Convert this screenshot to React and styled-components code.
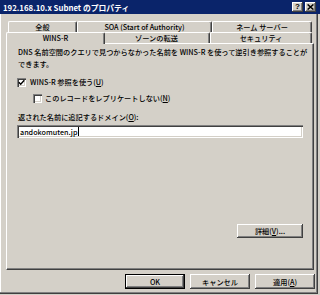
import React from "react";
import styled, { createGlobalStyle, css } from "styled-components";

const face = `"Noto Sans CJK JP", "Liberation Sans", sans-serif`;

const GlobalStyle = createGlobalStyle`
  html, body {
    margin: 0;
    padding: 0;
    background: #d4d0c8;
  }
`;

const raised = css`
  background: #d4d0c8;
  box-shadow: inset -1px -1px #404040, inset 1px 1px #fff, inset -2px -2px #808080;
`;

const sunken = css`
  box-shadow: inset 1px 1px #808080, inset 2px 2px #404040, inset -1px -1px #fff,
    inset -2px -2px #d4d0c8;
`;

const Window = styled.div`
  width: 320px;
  height: 295px;
  display: flex;
  flex-direction: column;
  background: #d4d0c8;
  overflow: hidden;
  font-family: ${face};
  font-size: 7.2px;
  font-weight: 500;
  color: #000;
`;

const TitleBar = styled.div`
  height: 14px;
  flex: none;
  box-sizing: border-box;
  padding: 0 4px 0 3px;
  background: #0a246a;
  color: #fff;
  display: flex;
  align-items: center;
  justify-content: space-between;
`;

const Title = styled.span`
  font-weight: bold;
  font-size: 7.8px;
  white-space: nowrap;
`;

const CaptionButtons = styled.div`
  display: flex;
  gap: 2px;
`;

const CaptionButton = styled.div`
  ${raised};
  width: 11px;
  height: 10px;
  box-sizing: border-box;
  display: flex;
  align-items: center;
  justify-content: center;
  color: #000;
  font-family: "Liberation Sans", sans-serif;
  font-weight: bold;
  font-size: 8px;
  line-height: 1;
`;

const Body = styled.div`
  width: 318px;
  height: 280px;
  flex: none;
  box-sizing: border-box;
  padding-top: 7px;
  border-right: 1px solid #404040;
  border-bottom: 1px solid #404040;
  box-shadow: inset -1px -1px #808080, inset 1px 0 #fff;
  display: flex;
  flex-direction: column;
`;

const TabRow = styled.div`
  display: flex;
  height: 11px;
  padding-left: 8px;
`;

const Tab = styled.div`
  width: ${(p) => p.$w}px;
  flex: none;
  box-sizing: border-box;
  background: #d4d0c8;
  border-top: 1px solid #fff;
  border-left: 1px solid #fff;
  border-right: 1px solid #404040;
  box-shadow: inset -1px 0 #808080;
  border-radius: 2px 2px 0 0;
  display: flex;
  align-items: center;
  justify-content: center;
  line-height: 10px;
  white-space: nowrap;
  ${(p) =>
    p.$active &&
    css`
      margin: 0 -2px -1px;
      width: ${p.$w + 4}px;
      position: relative;
      z-index: 2;
      padding-bottom: 1px;
    `}
`;

const Panel = styled.div`
  margin-left: 6px;
  width: 308px;
  height: 227px;
  flex: none;
  box-sizing: border-box;
  border-top: 1px solid #fff;
  border-left: 1px solid #fff;
  border-right: 1px solid #404040;
  border-bottom: 1px solid #404040;
  box-shadow: inset -1px -1px #808080;
  padding: 2px 10px 0 11px;
  display: flex;
  flex-direction: column;
`;

const Description = styled.p`
  margin: 0;
  line-height: 12px;
  white-space: nowrap;
`;

const CheckRow = styled.label`
  display: flex;
  align-items: center;
  gap: ${(p) => p.$gap || 4}px;
  height: 12px;
  margin-top: ${(p) => p.$mt}px;
  margin-left: ${(p) => p.$indent - 1}px;
  white-space: nowrap;
`;

const Box = styled.span`
  ${sunken};
  width: 9px;
  height: 9px;
  flex: none;
  background: #fff;
  display: flex;
  align-items: center;
  justify-content: center;
`;

const FieldLabel = styled.div`
  margin-top: 7px;
  line-height: 12px;
  white-space: nowrap;
`;

const Input = styled.div`
  ${sunken};
  margin: 2px 0 0 -1px;
  width: 286px;
  height: 13px;
  box-sizing: border-box;
  padding-left: 3px;
  background: #fff;
  display: flex;
  align-items: center;
  white-space: nowrap;
`;

const Caret = styled.span`
  width: 0;
  height: 9px;
  margin-left: 1px;
  border-left: 1px solid #000;
`;

const Button = styled.button`
  ${raised};
  width: ${(p) => p.$w}px;
  height: ${(p) => p.$h}px;
  flex: none;
  box-sizing: border-box;
  border: none;
  padding: 0;
  margin: 0;
  font: inherit;
  color: #000;
  display: flex;
  align-items: center;
  justify-content: center;
  white-space: nowrap;
  ${(p) =>
    p.$default &&
    css`
      border: 1px solid #000;
    `}
`;

const DetailButton = styled(Button)`
  margin-top: 86px;
  align-self: flex-end;
`;

const Footer = styled.div`
  margin-top: 4px;
  padding-right: 2px;
  display: flex;
  justify-content: flex-end;
  gap: 5px;
`;

const Key = styled.span`
  text-decoration: underline;
`;

const CheckMark = () => (
  <svg width="7" height="7" viewBox="0 0 7 7">
    <path d="M0.8 3.2 L2.7 5.2 L6.3 1.2" fill="none" stroke="#000" strokeWidth="1.4" />
  </svg>
);

const CloseGlyph = () => (
  <svg width="7" height="6" viewBox="0 0 7 6">
    <path d="M0.6 0.4 L6.4 5.6 M6.4 0.4 L0.6 5.6" stroke="#000" strokeWidth="1.4" />
  </svg>
);

export default function App() {
  return (
    <>
      <GlobalStyle />
      <Window>
        <TitleBar>
          <Title>192.168.10.x Subnet のプロパティ</Title>
          <CaptionButtons>
            <CaptionButton>?</CaptionButton>
            <CaptionButton>
              <CloseGlyph />
            </CaptionButton>
          </CaptionButtons>
        </TitleBar>
        <Body>
          <TabRow>
            <Tab $w={69}>全般</Tab>
            <Tab $w={135}>SOA (Start of Authority)</Tab>
            <Tab $w={100}>ネーム サーバー</Tab>
          </TabRow>
          <TabRow>
            <Tab $w={95} $active>
              WINS-R
            </Tab>
            <Tab $w={107}>ゾーンの転送</Tab>
            <Tab $w={102}>セキュリティ</Tab>
          </TabRow>
          <Panel>
            <Description>
              DNS 名前空間のクエリで見つからなかった名前を WINS-R を使って逆引き参照することが
              <br />
              できます。
            </Description>
            <CheckRow $mt={6} $indent={0}>
              <Box>
                <CheckMark />
              </Box>
              <span>
                WINS-R 参照を使う(<Key>U</Key>)
              </span>
            </CheckRow>
            <CheckRow $mt={4} $indent={16} $gap={3}>
              <Box />
              <span>
                このレコードをレプリケートしない(<Key>N</Key>)
              </span>
            </CheckRow>
            <FieldLabel>
              返された名前に追記するドメイン(<Key>O</Key>):
            </FieldLabel>
            <Input>
              andokomuten.jp
              <Caret />
            </Input>
            <DetailButton $w={66} $h={14}>
              詳細(<Key>V</Key>)...
            </DetailButton>
          </Panel>
          <Footer>
            <Button $w={60} $h={15} $default>
              OK
            </Button>
            <Button $w={60} $h={15}>
              キャンセル
            </Button>
            <Button $w={60} $h={15}>
              適用(<Key>A</Key>)
            </Button>
          </Footer>
        </Body>
      </Window>
    </>
  );
}
